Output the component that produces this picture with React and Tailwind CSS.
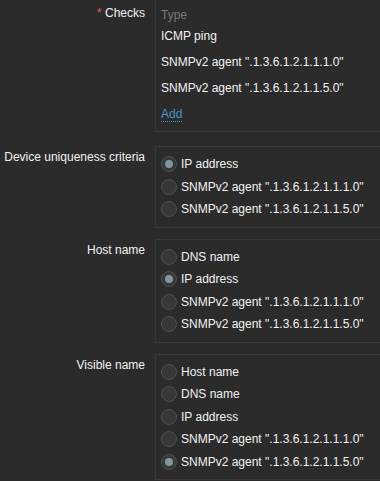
import React from "react";

function Radio({ label, checked }) {
  return (
    <div className="flex h-[22.5px] items-center">
      <span className="flex h-[16px] w-[16px] shrink-0 items-center justify-center rounded-full border border-[#4f4f4f] bg-[#383838]">
        {checked && <span className="h-[8px] w-[8px] rounded-full bg-[#7f97a3]" />}
      </span>
      <span className="ml-[4px] whitespace-nowrap">{label}</span>
    </div>
  );
}

function RadioGroup({ label, options, selected, className }) {
  return (
    <div className={"flex " + className}>
      <div className="w-[155px] shrink-0 pr-[10px] pt-[4px] text-right">{label}</div>
      <div className="flex-1 border-y border-l border-[#383838] pl-[5px] pt-[6px] pb-[6px]">
        {options.map((o, i) => (
          <Radio key={i} label={o} checked={i === selected} />
        ))}
      </div>
    </div>
  );
}

const SNMP1 = 'SNMPv2 agent ".1.3.6.1.2.1.1.1.0"';
const SNMP5 = 'SNMPv2 agent ".1.3.6.1.2.1.1.5.0"';

export default function App() {
  return (
    <div className="h-[481px] w-[380px] overflow-hidden bg-[#2b2b2b] font-['Liberation_Sans',Arial,sans-serif] text-[12px] leading-[14px] text-[#f2f2f2]">
      <div className="flex">
        <div className="w-[155px] shrink-0 pr-[10px] pt-[6px] text-right">
          <span className="text-[#e45959]">*</span> Checks
        </div>
        <div className="flex-1 border-b border-l border-[#383838] pl-[5px] pt-[8px] pb-[10px]">
          <div className="text-[#787878]">Type</div>
          <div className="mt-[7px]">ICMP ping</div>
          <div className="mt-[12px]">{SNMP1}</div>
          <div className="mt-[12px]">{SNMP5}</div>
          <div className="mt-[12px]">
            <span className="border-b border-dotted border-[#4796c4] text-[#4796c4]">Add</span>
          </div>
        </div>
      </div>
      <RadioGroup
        className="mt-[14px]"
        label="Device uniqueness criteria"
        options={["IP address", SNMP1, SNMP5]}
        selected={0}
      />
      <RadioGroup
        className="mt-[11px]"
        label="Host name"
        options={["DNS name", "IP address", SNMP1, SNMP5]}
        selected={1}
      />
      <RadioGroup
        className="mt-[11px]"
        label="Visible name"
        options={["Host name", "DNS name", "IP address", SNMP1, SNMP5]}
        selected={4}
      />
    </div>
  );
}
